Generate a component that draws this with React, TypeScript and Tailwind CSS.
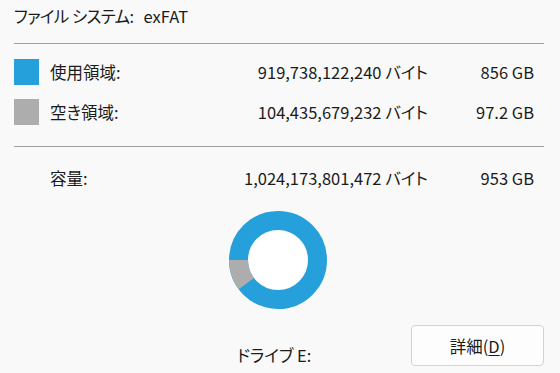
import React from 'react';

const FONT = { fontFamily: '"Noto Sans CJK JP", "Noto Sans", sans-serif' };

const USED = '#26a0da';
const FREE = '#adadad';

function Donut() {
  // free space slice: 97.2 / 953 of the ring, sweeping down from 9 o'clock
  const cx = 49;
  const cy = 49;
  const r = 39.5;
  const frac = 97.2 / 953;
  const a0 = Math.PI;
  const a1 = Math.PI - frac * 2 * Math.PI;
  const p = (a: number) => `${cx + r * Math.cos(a)} ${cy + r * Math.sin(a)}`;
  return (
    <svg width="98" height="98" viewBox="0 0 98 98">
      <circle cx={cx} cy={cy} r={r} fill="none" stroke={USED} strokeWidth="19" />
      <path d={`M ${p(a0)} A ${r} ${r} 0 0 0 ${p(a1)}`} fill="none" stroke={FREE} strokeWidth="19" />
      <circle cx={cx} cy={cy} r="29.5" fill="#ffffff" />
    </svg>
  );
}

function Row({ swatch, label, bytes, size }: { swatch?: string; label: string; bytes: string; size: string }) {
  return (
    <div className="flex h-[40px] items-center">
      <span className="h-[26px] w-[25px] shrink-0" style={swatch ? { background: swatch } : undefined} />
      <span className="ml-[11px] w-[150px]">{label}</span>
      <span className="w-[228px] text-right">{bytes}</span>
      <span className="w-[106px] text-right">{size}</span>
    </div>
  );
}

export default function App() {
  return (
    <div
      className="h-[373px] w-[560px] overflow-hidden bg-[#f9f9f9] pl-[14px] pr-[16px] text-[16.5px] leading-[20px] text-[#1b1b1b] [font-feature-settings:'palt']"
      style={FONT}
    >
      <div className="flex h-[32px] items-center">
        <span className="tracking-[-0.6px]">ファイル システム:</span>
        <span className="ml-[10px]">exFAT</span>
      </div>
      <div className="mt-[11px] h-px bg-[#a0a0a0]" />

      <div className="pt-[8px]">
        <Row swatch={USED} label="使用領域:" bytes="919,738,122,240 バイト" size="856 GB" />
        <Row swatch={FREE} label="空き領域:" bytes="104,435,679,232 バイト" size="97.2 GB" />
      </div>

      <div className="mt-[14px] h-px bg-[#a0a0a0]" />
      <div className="mt-[11px]">
        <Row label="容量:" bytes="1,024,173,801,472 バイト" size="953 GB" />
      </div>

      <div className="mt-[13px] flex justify-center pr-[2px]">
        <Donut />
      </div>

      <div className="mt-[16px] flex items-start">
        <span className="ml-[223px] mt-[20px]">ドライブ E:</span>
        <button className="ml-auto h-[41px] w-[133px] rounded-[4px] border border-[#d3d3d3] bg-[#fdfdfd]">
          詳細(<span className="underline underline-offset-2">D</span>)
        </button>
      </div>
    </div>
  );
}
